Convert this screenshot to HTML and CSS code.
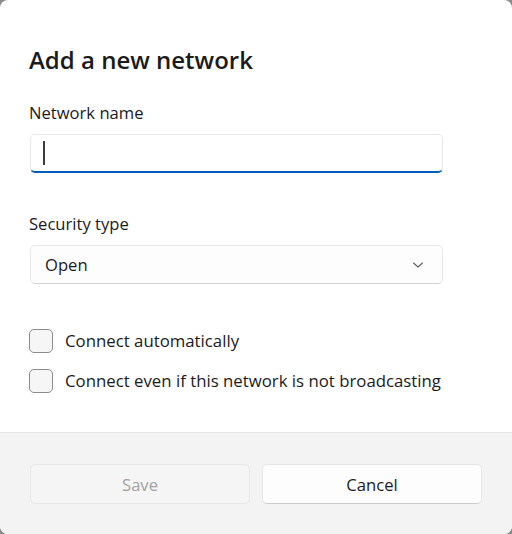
FILE: index.html
```html
<!DOCTYPE html>
<html lang="en">
<head>
<meta charset="utf-8">
<title>Add a new network</title>
<link rel="stylesheet" href="styles.css">
</head>
<body>
<div class="dialog">
  <div class="content">
    <h1 class="title">Add a new network</h1>
    <div class="field-label">Network name</div>
    <div class="textbox"><span class="caret"></span></div>
    <div class="field-label second">Security type</div>
    <div class="select">
      <span class="select-value">Open</span>
      <svg class="chevron" width="12" height="8" viewBox="0 0 12 8"><path d="M1.5 2 L6 6 L10.5 2" fill="none" stroke="#5f5f5f" stroke-width="1.1" stroke-linecap="round" stroke-linejoin="round"/></svg>
    </div>
    <div class="checks">
      <label class="check"><span class="box"></span><span class="check-text">Connect automatically</span></label>
      <label class="check"><span class="box"></span><span class="check-text">Connect even if this network is not broadcasting</span></label>
    </div>
  </div>
  <div class="footer">
    <button class="btn disabled">Save</button>
    <button class="btn">Cancel</button>
  </div>
</div>
</body>
</html>
```
FILE: styles.css
```css
html, body {
  margin: 0;
  padding: 0;
  background: #8a8a8a;
}
body {
  font-family: "Open Sans", "Noto Sans", sans-serif;
  color: #1b1b1b;
}
.dialog {
  width: 512px;
  height: 534px;
  background: #ffffff;
  border-radius: 8px;
  overflow: hidden;
  display: flex;
  flex-direction: column;
}
.content {
  padding: 44px 30px 0 30px;
}
.title {
  margin: 0;
  font-size: 24px;
  font-weight: 600;
  line-height: 32px;
  height: 32px;
  margin-left: -1px;
}
.field-label {
  margin-top: 25px;
  font-size: 16.6px;
  line-height: 24px;
  margin-left: -1px;
}
.field-label.second {
  margin-top: 39px;
}
.textbox {
  margin-top: 9px;
  width: 413px;
  height: 39px;
  box-sizing: border-box;
  border: 1px solid #e8e8e8;
  border-bottom: 2px solid #005fb8;
  border-radius: 5px;
  background: #ffffff;
  display: flex;
  align-items: center;
  padding-left: 12px;
}
.caret {
  display: block;
  width: 2px;
  height: 24px;
  background: #3c3c3c;
}
.select {
  margin-top: 9px;
  width: 413px;
  height: 39px;
  box-sizing: border-box;
  border: 1px solid #e8e8e8;
  border-bottom-color: #d2d2d2;
  border-radius: 5px;
  background: #fdfdfd;
  display: flex;
  align-items: center;
  justify-content: space-between;
  padding: 0 18px 0 14px;
}
.select-value {
  font-size: 16.6px;
}
.checks {
  margin-top: 45px;
  display: flex;
  flex-direction: column;
  gap: 16px;
}
.check {
  display: flex;
  align-items: center;
  gap: 12px;
  height: 24px;
  margin-left: -1px;
}
.box {
  width: 24px;
  height: 24px;
  box-sizing: border-box;
  border: 1px solid #8b8b8b;
  border-radius: 5px;
  background: #f6f6f6;
}
.check-text {
  font-size: 16.8px;
  line-height: 24px;
}
.footer {
  margin-top: auto;
  height: 102px;
  box-sizing: border-box;
  background: #f3f3f3;
  border-top: 1px solid #e5e5e5;
  padding: 31px 30px 0 30px;
  display: flex;
  gap: 12px;
}
.btn {
  width: 220px;
  height: 40px;
  box-sizing: border-box;
  border: 1px solid #e5e5e5;
  border-bottom-color: #cccccc;
  border-radius: 5px;
  background: #fdfdfd;
  font-family: inherit;
  font-size: 16.6px;
  color: #1b1b1b;
  padding: 0;
}
.btn.disabled {
  background: #f5f5f5;
  border-color: #e8e8e8;
  color: #a2a2a2;
}
```
